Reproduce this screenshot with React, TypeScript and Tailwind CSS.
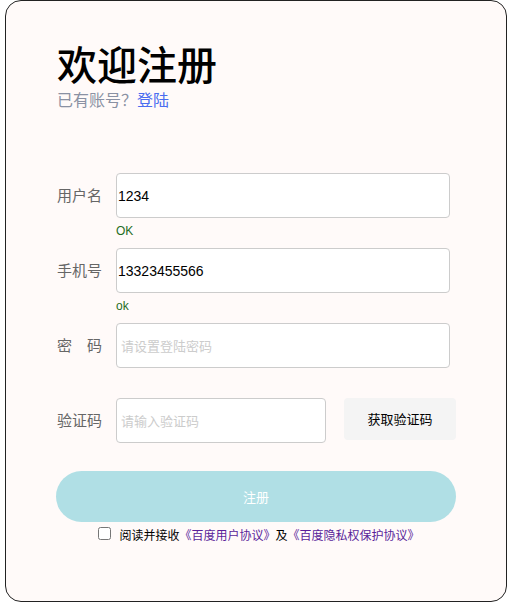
const fields = [
    { label: '用户名', value: '1234', placeholder: '', msg: 'OK' },
    { label: '手机号', value: '13323455566', placeholder: '', msg: 'ok' },
    { label: '密　码', value: '', placeholder: '请设置登陆密码', msg: '' },
]

const App = () => {
    return (
        <div className="w-[523px] h-[607px] bg-white font-['Liberation_Sans','Noto_Sans_CJK_SC',sans-serif]">
            <div className="ml-[5px] w-[502px] h-[602px] border border-[#222] rounded-[16px] bg-[#fffaf9] pl-[51px] pt-[38px]">
                {/* Header */}
                <h1 className="text-[40px] leading-[48px] font-medium text-black font-['Noto_Sans_CJK_SC',sans-serif]">欢迎注册</h1>
                <p className="text-[16px] leading-[24px] text-[#8a91a3] font-['Noto_Sans_CJK_SC',sans-serif]">
                    已有账号？<span className="text-[#4a6cf0]">登陆</span>
                </p>

                {/* Form */}
                <div className="mt-[62px]">
                    {fields.map((f) => (
                        <div key={f.label}>
                            <div className="flex items-center h-[45px]">
                                <span className="w-[59px] text-[15px] text-[#666] font-['Noto_Sans_CJK_SC',sans-serif]">{f.label}</span>
                                <input
                                    defaultValue={f.value}
                                    placeholder={f.placeholder}
                                    className="w-[334px] h-[45px] border border-[#ccc] rounded-[4px] bg-white px-[1px] text-[14px] text-black outline-none placeholder:pl-[3px] placeholder:text-[#ccc] placeholder:text-[13px]"
                                />
                            </div>
                            <div className="h-[30px] pl-[59px] pt-[5px] text-[12px] leading-[16px] text-[#1f6e1f]">{f.msg}</div>
                        </div>
                    ))}

                    <div className="flex items-center h-[45px]">
                        <span className="w-[59px] text-[15px] text-[#666] font-['Noto_Sans_CJK_SC',sans-serif]">验证码</span>
                        <input
                            placeholder="请输入验证码"
                            className="w-[210px] h-[45px] border border-[#ccc] rounded-[4px] bg-white px-[4px] text-[14px] outline-none placeholder:text-[#ccc] placeholder:text-[13px]"
                        />
                        <button className="ml-[18px] self-start w-[112px] h-[42px] rounded-[4px] bg-[#f4f4f4] text-[13px] text-black font-['Noto_Sans_CJK_SC',sans-serif]">
                            获取验证码
                        </button>
                    </div>

                    <button className="mt-[28px] -ml-[1px] w-[400px] h-[51px] rounded-full bg-[#b0dfe5] text-white text-[13px] font-['Noto_Sans_CJK_SC',sans-serif]">
                        注册
                    </button>

                    <div className="w-[400px] flex items-center justify-center gap-[8px] mt-[4px] pl-[4px] text-[12px] leading-[18px] font-['Noto_Sans_CJK_SC',sans-serif]">
                        <input type="checkbox" className="w-[13px] h-[13px] -mt-[4px]" />
                        <span className="text-black">
                            阅读并接收<span className="text-[#5a1f9a]">《百度用户协议》</span>及<span className="text-[#5a1f9a]">《百度隐私权保护协议》</span>
                        </span>
                    </div>
                </div>
            </div>
        </div>
    )
}

export default App
